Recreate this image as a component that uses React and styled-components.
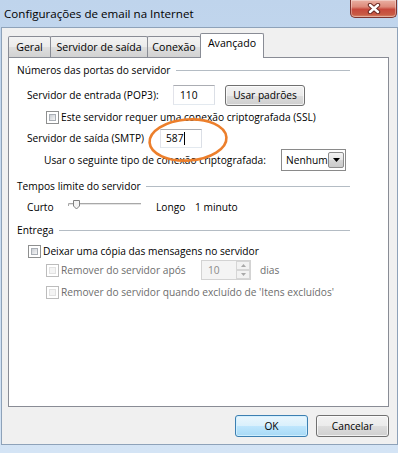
import React from 'react';
import styled, { createGlobalStyle } from 'styled-components';

const Global = createGlobalStyle`
  html, body { margin: 0; padding: 0; }
  body {
    width: 398px; height: 453px; overflow: hidden;
    font-family: "Open Sans", "Noto Sans", sans-serif;
    font-size: 10.2px; color: #000; background: #cddff2;
  }
  * { box-sizing: border-box; }
`;

const Window = styled.div`
  width: 398px; height: 453px;
  display: flex; flex-direction: column;
  background: linear-gradient(180deg, #bfd4ec 0%, #c9dcf1 40%, #d4e4f5 100%);
`;

const TitleBar = styled.div`
  height: 27px; flex: none;
  display: flex; align-items: flex-start;
  padding-left: 4px;
`;

const Title = styled.div`
  flex: 1;
  font-size: 11.6px;
  line-height: 27px;
  color: #000;
`;

const CloseBtn = styled.div`
  width: 47px; height: 18px; margin-right: 1px;
  border: 1px solid #7d3530; border-top: none;
  border-radius: 0 0 5px 5px;
  background: linear-gradient(180deg, #eab0a3 0%, #dd8a7a 40%, #c7493c 55%, #c85a44 85%, #d98a6e 100%);
  box-shadow: inset 0 0 0 1px rgba(255, 255, 255, 0.35);
  display: flex; align-items: center; justify-content: center;
`;

const Client = styled.div`
  margin-left: 1px;
  width: 397px; height: 418px; flex: none;
  border: 1px solid #8ea2b9;
  background: #f0f0f0;
  display: flex; flex-direction: column;
  padding: 0 8px 0 6px;
`;

const TabStrip = styled.div`
  display: flex; align-items: flex-end;
  height: 24px; margin-top: 5px; flex: none;
  position: relative; z-index: 2;
`;

const Tab = styled.div`
  width: ${p => p.$w}px;
  height: ${p => (p.$active ? 25 : 21)}px;
  margin-left: ${p => (p.$first ? 0 : -1)}px;
  margin-bottom: ${p => (p.$active ? -1 : 0)}px;
  border: 1px solid #898c95;
  border-bottom: none;
  border-radius: 2px 2px 0 0;
  background: ${p => (p.$active ? '#fff' : 'linear-gradient(180deg, #f3f3f3 0%, #ebebeb 50%, #dedede 51%, #d2d2d2 100%)')};
  position: relative; z-index: ${p => (p.$active ? 2 : 1)};
  display: flex; justify-content: center; align-items: flex-start;
  padding-top: ${p => (p.$active ? 2 : 3)}px;
  white-space: nowrap;
  font-size: 10.6px;
`;

const Panel = styled.div`
  height: 350px; flex: none;
  border: 1px solid #898c95;
  background: #fff;
  display: flex; flex-direction: column;
`;

const GroupHeader = styled.div`
  display: flex; align-items: center;
  height: 20px; margin-top: ${p => p.$mt}px;
  padding-left: 8px; margin-right: 38px;
  white-space: nowrap;
`;

const GroupLine = styled.div`
  flex: 1; height: 1px; margin-left: 5px;
  background: #b4bcc4;
`;

const Row = styled.div`
  display: flex; align-items: center;
  height: ${p => p.$h}px; margin-top: ${p => p.$mt}px;
  padding-left: ${p => p.$pl}px;
  color: ${p => (p.$disabled ? '#6d6d6d' : '#000')};
  white-space: nowrap;
`;

const Label = styled.span`
  width: ${p => p.$w}px; flex: none;
  margin-left: ${p => p.$ml || 0}px;
`;

const Text = styled.span`
  margin-left: ${p => p.$ml || 0}px;
`;

const TextBox = styled.div`
  width: ${p => p.$w}px; height: ${p => p.$h}px; flex: none;
  border: 1px solid;
  border-color: #abadb3 #dbdfe6 #e3e9ef #e2e3ea;
  background: #fff;
  display: flex; align-items: center;
  padding-left: ${p => p.$pad}px;
  position: relative;
`;

const Caret = styled.span`
  display: inline-block; width: 1px; height: 13px;
  background: #000; margin-left: 1px;
`;

const Ellipse = styled.svg`
  position: absolute;
  left: -13px; top: -12px;
  overflow: visible;
  pointer-events: none;
`;

const CheckBox = styled.span`
  width: 13px; height: 13px; flex: none;
  border: 1px solid ${p => (p.$disabled ? '#bcbcbc' : '#8e8f8f')};
  background: #fff;
  padding: 2px;
  display: inline-flex;
  &::after {
    content: "";
    flex: 1;
    border: 1px solid ${p => (p.$disabled ? '#e2e2e2' : '#a9aeb5')};
    background: ${p => (p.$disabled ? '#f4f4f4' : 'linear-gradient(135deg, #cbcfd5 0%, #f6f6f6 100%)')};
  }
`;

const Button = styled.div`
  width: ${p => p.$w}px; height: ${p => p.$h}px; flex: none;
  margin-left: ${p => p.$ml || 0}px;
  border: 1px solid ${p => (p.$default ? '#3c7fb1' : '#707070')};
  border-radius: 3px;
  background: ${p => (p.$default
    ? 'linear-gradient(180deg, #eaf6fd 0%, #d9f0fc 50%, #bee6fd 51%, #a7d9f5 100%)'
    : 'linear-gradient(180deg, #f2f2f2 0%, #ebebeb 50%, #dddddd 51%, #cfcfcf 100%)')};
  box-shadow: inset 0 0 0 1px ${p => (p.$default ? 'rgba(210,240,255,0.9)' : 'rgba(255,255,255,0.7)')};
  display: flex; align-items: center; justify-content: center;
  white-space: nowrap;
`;

const Select = styled.div`
  width: 65px; height: 22px; flex: none;
  border: 1px solid #8a8a8a;
  background: #fff;
  display: flex; align-items: center;
  padding: 0 1px 0 4px;
`;

const SelectValue = styled.span`
  flex: 1;
`;

const DropBtn = styled.span`
  width: 16px; height: 16px; flex: none;
  border: 1px solid #8c8c8c;
  border-radius: 2px;
  background: linear-gradient(180deg, #f4f4f4 0%, #e6e6e6 50%, #d6d6d6 51%, #cacaca 100%);
  display: flex; align-items: center; justify-content: center;
`;

const SpinBox = styled.div`
  width: 50px; height: 20px; flex: none;
  border: 1px solid #d3d3d3;
  background: #f4f4f4;
  color: #8a8a8a;
  display: flex; align-items: center;
  padding-left: 6px;
`;

const SpinValue = styled.span`
  flex: 1;
`;

const SpinButtons = styled.div`
  width: 14px; height: 18px; flex: none;
  display: flex; flex-direction: column;
`;

const SpinHalf = styled.span`
  flex: 1;
  border: 1px solid #d6d6d6;
  background: #f2f2f2;
  display: flex; align-items: center; justify-content: center;
`;

const Footer = styled.div`
  display: flex; justify-content: flex-end; gap: 8px;
  margin-top: 8px;
`;

const BottomFrame = styled.div`
  flex: 1;
`;

function CloseGlyph() {
  return (
    <svg width="14" height="11" viewBox="0 0 14 11">
      <path d="M3 2 L11 9 M11 2 L3 9" stroke="#6b2a24" strokeWidth="4.4" strokeLinecap="round" />
      <path d="M3 2 L11 9 M11 2 L3 9" stroke="#ffffff" strokeWidth="2.4" strokeLinecap="round" />
    </svg>
  );
}

function Slider() {
  return (
    <svg width="74" height="14" viewBox="0 0 74 14" style={{ flex: 'none' }}>
      <line x1="0.5" y1="3.5" x2="73" y2="3.5" stroke="#a8a8a8" />
      <line x1="1" y1="4.5" x2="73" y2="4.5" stroke="#e4e4e4" />
      <line x1="0.5" y1="3.5" x2="0.5" y2="6" stroke="#a8a8a8" />
      <path d="M5.5 0.5 H11.5 V6 L8.5 9 L5.5 6 Z" fill="#f3f3f3" stroke="#7f7f7f" />
    </svg>
  );
}

function SmallTriangle({ up, color = '#000', w = 7, h = 4 }) {
  return (
    <svg width={w} height={h} viewBox={`0 0 ${w} ${h}`}>
      <path d={up ? `M0 ${h} L${w / 2} 0 L${w} ${h} Z` : `M0 0 L${w} 0 L${w / 2} ${h} Z`} fill={color} />
    </svg>
  );
}

export default function App() {
  return (
    <>
      <Global />
      <Window>
        <TitleBar>
          <Title>Configurações de email na Internet</Title>
          <CloseBtn><CloseGlyph /></CloseBtn>
        </TitleBar>
        <Client>
          <TabStrip>
            <Tab $first $w={43}>Geral</Tab>
            <Tab $w={98}>Servidor de saída</Tab>
            <Tab $w={54}>Conexão</Tab>
            <Tab $active $w={64}>Avançado</Tab>
          </TabStrip>
          <Panel>
            <GroupHeader $mt={2}>Números das portas do servidor<GroupLine /></GroupHeader>
            <Row $h={22} $mt={4} $pl={18}>
              <Label $w={146}>Servidor de entrada (POP3):</Label>
              <TextBox $w={42} $h={20} $pad={6}>110</TextBox>
              <Button $w={80} $h={21} $ml={10}>Usar padrões</Button>
            </Row>
            <Row $h={16} $mt={3} $pl={37}>
              <CheckBox />
              <Text $ml={2}>Este servidor requer uma conexão criptografada (SSL)</Text>
            </Row>
            <Row $h={20} $mt={3} $pl={18}>
              <Label $w={133}>Servidor de saída (SMTP)</Label>
              <TextBox $w={42} $h={19} $pad={5}>
                587<Caret />
                <Ellipse width="80" height="44" viewBox="0 0 80 44">
                  <ellipse cx="40" cy="22" rx="38.5" ry="20.5" fill="none" stroke="#ec7f2c" strokeWidth="2.6" transform="rotate(-4 40 22)" />
                </Ellipse>
              </TextBox>
            </Row>
            <Row $h={22} $mt={1} $pl={35}>
              <Label $w={237}>Usar o seguinte tipo de conexão criptografada:</Label>
              <Select>
                <SelectValue>Nenhum</SelectValue>
                <DropBtn><SmallTriangle /></DropBtn>
              </Select>
            </Row>
            <GroupHeader $mt={5}>Tempos limite do servidor<GroupLine /></GroupHeader>
            <Row $h={20} $mt={1} $pl={18}>
              <Label $w={41}>Curto</Label>
              <Slider />
              <Label $w={39} $ml={14}>Longo</Label>
              <Text>1 minuto</Text>
            </Row>
            <GroupHeader $mt={3}>Entrega<GroupLine /></GroupHeader>
            <Row $h={16} $mt={3} $pl={19}>
              <CheckBox />
              <Text $ml={2}>Deixar uma cópia das mensagens no servidor</Text>
            </Row>
            <Row $h={20} $mt={1} $pl={37} $disabled>
              <CheckBox $disabled />
              <Label $w={140} $ml={2}>Remover do servidor após</Label>
              <SpinBox>
                <SpinValue>10</SpinValue>
                <SpinButtons>
                  <SpinHalf><SmallTriangle up color="#a8a8a8" w={5} h={3} /></SpinHalf>
                  <SpinHalf><SmallTriangle color="#a8a8a8" w={5} h={3} /></SpinHalf>
                </SpinButtons>
              </SpinBox>
              <Text $ml={9}>dias</Text>
            </Row>
            <Row $h={16} $mt={4} $pl={37} $disabled>
              <CheckBox $disabled />
              <Text $ml={2}>Remover do servidor quando excluído de 'Itens excluídos'</Text>
            </Row>
          </Panel>
          <Footer>
            <Button $default $w={73} $h={22}>OK</Button>
            <Button $w={73} $h={22}>Cancelar</Button>
          </Footer>
        </Client>
        <BottomFrame />
      </Window>
    </>
  );
}
